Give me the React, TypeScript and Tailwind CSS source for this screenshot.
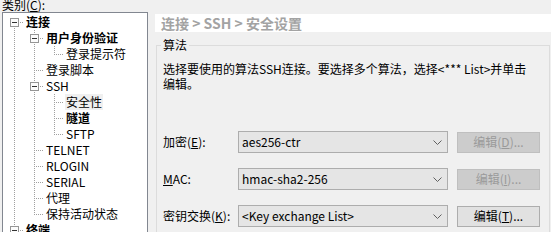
type GuideKind = 'pipe' | 'tee' | 'elbow' | 'exp-d' | 'exp-ud';

type TreeRow = {
  label: string;
  bold?: boolean;
  selected?: boolean;
  guides: GuideKind[];
};

const rows: TreeRow[] = [
  { label: '连接', bold: true, guides: ['exp-d'] },
  { label: '用户身份验证', bold: true, guides: ['pipe', 'exp-ud'] },
  { label: '登录提示符', guides: ['pipe', 'pipe', 'elbow'] },
  { label: '登录脚本', guides: ['pipe', 'tee'] },
  { label: 'SSH', guides: ['pipe', 'exp-ud'] },
  { label: '安全性', selected: true, guides: ['pipe', 'pipe', 'tee'] },
  { label: '隧道', bold: true, guides: ['pipe', 'pipe', 'tee'] },
  { label: 'SFTP', guides: ['pipe', 'pipe', 'elbow'] },
  { label: 'TELNET', guides: ['pipe', 'tee'] },
  { label: 'RLOGIN', guides: ['pipe', 'tee'] },
  { label: 'SERIAL', guides: ['pipe', 'tee'] },
  { label: '代理', guides: ['pipe', 'tee'] },
  { label: '保持活动状态', guides: ['pipe', 'elbow'] },
  { label: '终端', bold: true, guides: ['exp-ud'] },
];

const dots = { stroke: '#a0a0a0', strokeDasharray: '1 1', strokeWidth: 1 };

const Guide = ({ kind }: { kind: GuideKind }) => (
  <svg width="20" height="16" className="block shrink-0">
    {kind === 'pipe' && <line x1="10.5" y1="0" x2="10.5" y2="16" {...dots} />}
    {kind === 'tee' && (
      <>
        <line x1="10.5" y1="0" x2="10.5" y2="16" {...dots} />
        <line x1="12" y1="8.5" x2="20" y2="8.5" {...dots} />
      </>
    )}
    {kind === 'elbow' && (
      <>
        <line x1="10.5" y1="0" x2="10.5" y2="9" {...dots} />
        <line x1="12" y1="8.5" x2="20" y2="8.5" {...dots} />
      </>
    )}
    {(kind === 'exp-d' || kind === 'exp-ud') && (
      <>
        {kind === 'exp-ud' && <line x1="10.5" y1="0" x2="10.5" y2="4" {...dots} />}
        <line x1="10.5" y1="14" x2="10.5" y2="16" {...dots} />
        <line x1="16" y1="8.5" x2="20" y2="8.5" {...dots} />
        <rect x="6.5" y="4.5" width="8" height="8" fill="#fcfcfc" stroke="#969696" />
        <line x1="8" y1="8.5" x2="13" y2="8.5" stroke="#333" />
      </>
    )}
  </svg>
);

const Combo = ({ value }: { value: string }) => (
  <div className="flex h-[22px] w-[210px] items-center justify-between border border-[#adadad] bg-[#e5e5e5] pl-[3px] pr-[5px]">
    <span className="leading-[16px]">{value}</span>
    <svg width="9" height="5" className="block">
      <path d="M0.5 0.5 L4.5 4.5 L8.5 0.5" fill="none" stroke="#606060" />
    </svg>
  </div>
);

const EditButton = ({ hotkey, disabled }: { hotkey: string; disabled?: boolean }) => (
  <div
    className={
      disabled
        ? 'ml-[9px] flex h-[21px] w-[83px] items-center justify-center border border-[#bfbfbf] bg-[#cccccc] text-[#9a9a9a]'
        : 'ml-[9px] flex h-[21px] w-[83px] items-center justify-center border border-[#adadad] bg-[#e1e1e1] text-black'
    }
  >
    <span className="leading-[16px]">
      编辑(<u>{hotkey}</u>)...
    </span>
  </div>
);

export default function App() {
  return (
    <div className="flex h-[232px] w-[551px] overflow-hidden bg-[#f0f0f0] font-['Noto_Sans_CJK_SC','Noto_Sans',sans-serif] text-[12px] text-black">
      {/* Category tree */}
      <div className="flex w-[148px] shrink-0 flex-col pl-[2px]">
        <div className="-mt-[2px] h-[16px] leading-[14px]">
          类别(<u>C</u>):
        </div>
        <div className="h-[240px] border border-[#828790] bg-white pt-[1px] pl-[1px]">
          {rows.map((row) => (
            <div key={row.label} className="flex h-[16px] items-center">
              {row.guides.map((g, i) => (
                <Guide key={i} kind={g} />
              ))}
              <span
                className={
                  (row.bold ? 'font-bold ' : '') +
                  (row.selected ? 'bg-[#f0f0f0] ' : '') +
                  'ml-[1px] px-[1px] leading-[16px] whitespace-nowrap'
                }
              >
                {row.label}
              </span>
            </div>
          ))}
        </div>
      </div>

      {/* Settings panel */}
      <div className="ml-[7px] flex min-w-0 flex-1 flex-col pt-[14px]">
        <div className="flex h-[21px] items-center bg-white pl-[6px] text-[14px] font-bold text-[#a3a3a3]">
          <span className="leading-[18px] whitespace-nowrap">连接 &gt; SSH &gt; 安全设置</span>
        </div>

        <fieldset className="mx-[1px] mt-[5px] border border-[#dcdcdc] pb-[20px] pl-[6px]">
          <legend className="-ml-[2px] px-[2px] leading-[16px]">算法</legend>
          <p className="mt-[8px] leading-[15px] whitespace-nowrap">
            选择要使用的算法SSH连接。要选择多个算法，选择&lt;*** List&gt;并单击
            <br />
            编辑。
          </p>

          <div className="mt-[40px] flex flex-col gap-[15px]">
            <div className="flex items-center">
              <span className="w-[75px]">
                加密(<u>E</u>):
              </span>
              <Combo value="aes256-ctr" />
              <EditButton hotkey="D" disabled />
            </div>
            <div className="flex items-center">
              <span className="w-[75px]">
                <u>M</u>AC:
              </span>
              <Combo value="hmac-sha2-256" />
              <EditButton hotkey="I" disabled />
            </div>
            <div className="flex items-center">
              <span className="w-[75px]">
                密钥交换(<u>K</u>):
              </span>
              <Combo value="<Key exchange List>" />
              <EditButton hotkey="T" />
            </div>
          </div>
        </fieldset>
      </div>
    </div>
  );
}
